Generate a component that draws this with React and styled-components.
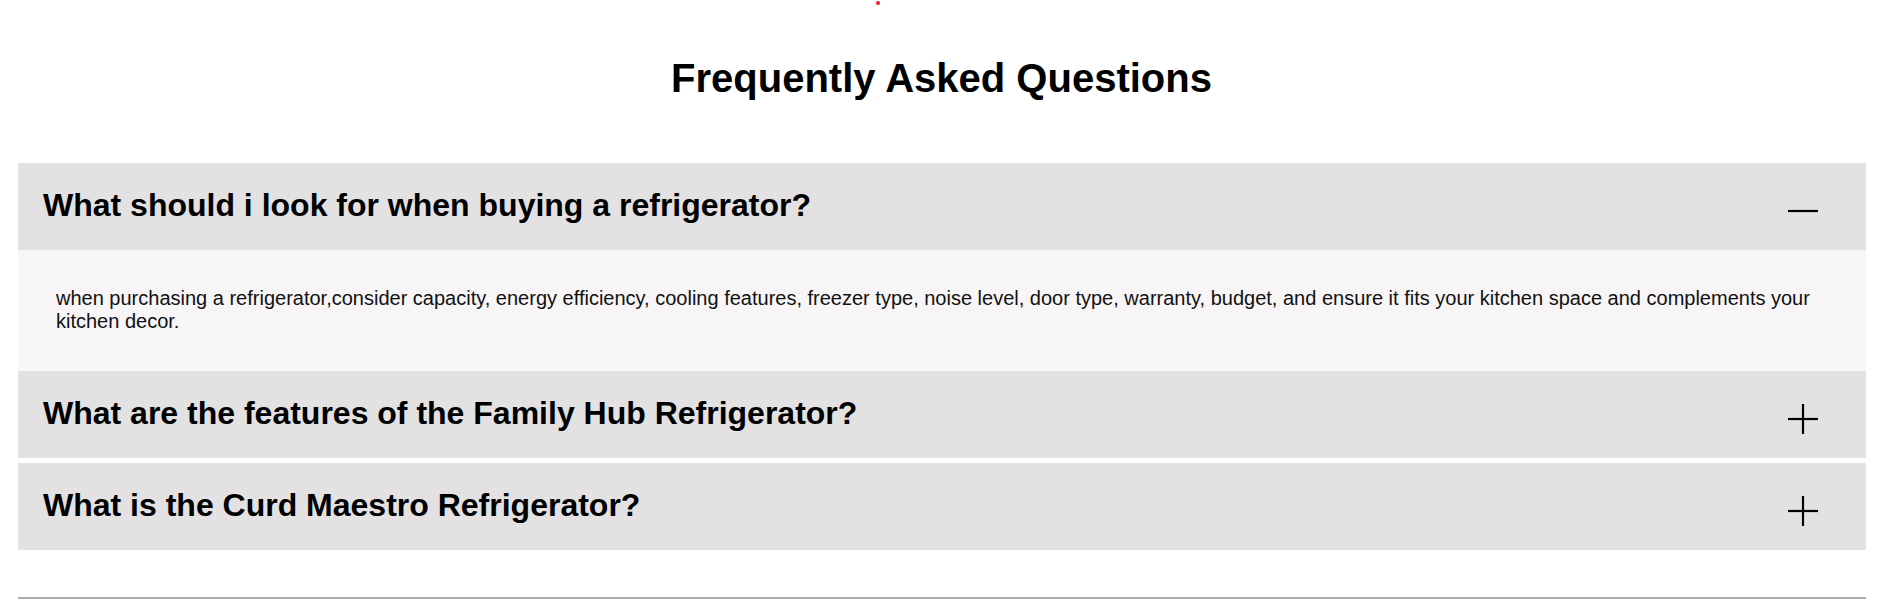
import React from "react";
import styled, { createGlobalStyle } from "styled-components";

const GlobalStyle = createGlobalStyle`
  html, body {
    margin: 0;
    padding: 0;
    background: #ffffff;
    font-family: "Liberation Sans", Arial, sans-serif;
    color: #000000;
  }
`;

const Page = styled.div`
  width: 1883px;
  display: flex;
  flex-direction: column;
`;

const TopDot = styled.div`
  align-self: center;
  width: 4px;
  height: 4px;
  margin: 1px 0 0 -128px;
  border-radius: 50%;
  background: #e0202a;
`;

const Title = styled.h1`
  margin: 0;
  padding-top: 50px;
  height: 158px;
  box-sizing: border-box;
  text-align: center;
  font-size: 40px;
  font-weight: 700;
  line-height: 46px;
`;

const List = styled.div`
  display: flex;
  flex-direction: column;
  padding: 0 17px 0 18px;
`;

const Item = styled.div`
  margin-bottom: ${(p) => (p.$open ? 0 : 5)}px;
`;

const Header = styled.div`
  height: 87px;
  background: #e3e1e2;
  display: flex;
  align-items: center;
  justify-content: space-between;
  padding: 0 48px 0 25px;
`;

const Question = styled.h2`
  margin: 0;
  font-size: 32px;
  font-weight: 700;
  line-height: 37px;
  padding-bottom: 2px;
`;

const Toggle = styled.span`
  display: flex;
  width: 30px;
  height: 30px;
  margin-top: 9px;
`;

const Answer = styled.div`
  background: #f7f5f6;
  padding: 37px 38px 38px 38px;
  font-size: 20px;
  line-height: 23px;
  color: #111111;
`;

const Rule = styled.hr`
  margin: 42px 17px 0 18px;
  border: 0;
  border-top: 2px solid #acacac;
`;

function Icon({ open }) {
  return (
    <svg width="30" height="30" viewBox="0 0 30 30">
      <line x1="0" y1="15" x2="30" y2="15" stroke="#000" strokeWidth="2.2" />
      {!open && (
        <line x1="15" y1="0" x2="15" y2="30" stroke="#000" strokeWidth="2.2" />
      )}
    </svg>
  );
}

const faqs = [
  {
    q: "What should i look for when buying a refrigerator?",
    a: "when purchasing a refrigerator,consider capacity, energy efficiency, cooling features, freezer type, noise level, door type, warranty, budget, and ensure it fits your kitchen space and complements your kitchen decor.",
    open: true,
  },
  { q: "What are the features of the Family Hub Refrigerator?" },
  { q: "What is the Curd Maestro Refrigerator?" },
];

export default function App() {
  return (
    <>
      <GlobalStyle />
      <Page>
        <TopDot />
        <Title>Frequently Asked Questions</Title>
        <List>
          {faqs.map((f) => (
            <Item key={f.q} $open={f.open}>
              <Header>
                <Question>{f.q}</Question>
                <Toggle>
                  <Icon open={f.open} />
                </Toggle>
              </Header>
              {f.open && <Answer>{f.a}</Answer>}
            </Item>
          ))}
        </List>
        <Rule />
      </Page>
    </>
  );
}
